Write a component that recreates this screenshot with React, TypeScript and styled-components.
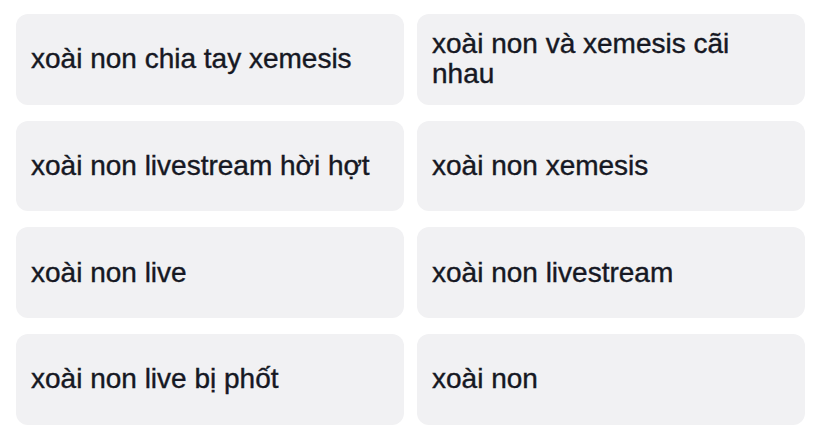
import React from "react";
import styled, { createGlobalStyle } from "styled-components";

const GlobalStyle = createGlobalStyle`
  html, body {
    margin: 0;
    padding: 0;
    background: #ffffff;
  }
  body {
    font-family: "Liberation Sans", Arial, sans-serif;
    -webkit-font-smoothing: antialiased;
  }
`;

const Grid = styled.div`
  display: grid;
  grid-template-columns: 388px 388px;
  grid-auto-rows: 90.7px;
  column-gap: 13px;
  row-gap: 16px;
  padding: 14px 0 0 16px;
`;

const Suggestion = styled.div`
  display: flex;
  align-items: center;
  box-sizing: border-box;
  padding: 0 20px 0 15px;
  background: #f1f1f3;
  border-radius: 12px;
  color: #161823;
  font-size: 28px;
  line-height: 30px;
  font-weight: 400;
  -webkit-text-stroke: 0.4px #161823;
`;

const items = [
  "xoài non chia tay xemesis",
  "xoài non và xemesis cãi nhau",
  "xoài non livestream hời hợt",
  "xoài non xemesis",
  "xoài non live",
  "xoài non livestream",
  "xoài non live bị phốt",
  "xoài non",
];

export default function App() {
  return (
    <>
      <GlobalStyle />
      <Grid>
        {items.map((t) => (
          <Suggestion key={t}>{t}</Suggestion>
        ))}
      </Grid>
    </>
  );
}
